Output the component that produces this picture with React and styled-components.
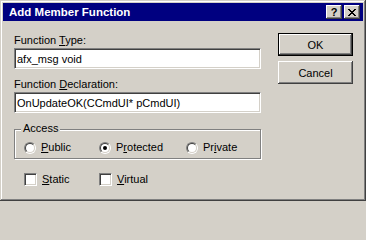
import React from "react";
import styled, { createGlobalStyle } from "styled-components";

const GlobalStyle = createGlobalStyle`
  html, body {
    margin: 0;
    padding: 0;
    background: #d4d0c8;
  }
  body {
    font-family: "Liberation Sans", Arial, sans-serif;
  }
`;

const raised = `
  box-shadow: inset -1px -1px #404040, inset 1px 1px #ffffff,
    inset -2px -2px #808080, inset 2px 2px #d4d0c8;
`;

const sunken = `
  border: 1px solid;
  border-color: #808080 #ffffff #ffffff #808080;
  box-shadow: inset 1px 1px #404040, inset -1px -1px #d4d0c8;
`;

const closePixels = [
  [0, 0], [6, 0],
  [1, 1], [5, 1],
  [2, 2], [4, 2],
  [3, 3],
  [2, 4], [4, 4],
  [1, 5], [5, 5],
  [0, 6], [6, 6],
];

function App() {
  return (
    <>
      <GlobalStyle />
      <Window>
        <TitleBar>
          <Title>Add Member Function</Title>
          <CaptionButton $gap>
            <HelpGlyph>?</HelpGlyph>
          </CaptionButton>
          <CaptionButton>
            <svg width="8" height="7" viewBox="0 0 8 7" shapeRendering="crispEdges">
              {closePixels.map(([x, y]) => (
                <rect key={`${x}-${y}`} x={x} y={y} width="2" height="1" fill="#000" />
              ))}
            </svg>
          </CaptionButton>
        </TitleBar>
        <Client>
          <LeftColumn>
            <Label>
              Function <u>T</u>ype:
            </Label>
            <Edit>afx_msg void</Edit>
            <Label $top={9}>
              Function <u>D</u>eclaration:
            </Label>
            <Edit>OnUpdateOK(CCmdUI* pCmdUI)</Edit>
            <Group>
              <Legend>Access</Legend>
              <OptionRow $top={6} $indent={9}>
                <Option $width={75}>
                  <Radio />
                  <span>
                    <u>P</u>ublic
                  </span>
                </Option>
                <Option $width={87}>
                  <Radio $checked />
                  <span>
                    P<u>r</u>otected
                  </span>
                </Option>
                <Option>
                  <Radio />
                  <span>
                    Pr<u>i</u>vate
                  </span>
                </Option>
              </OptionRow>
            </Group>
            <OptionRow $top={14} $indent={10}>
              <Option $width={75}>
                <Checkbox />
                <span>
                  <u>S</u>tatic
                </span>
              </Option>
              <Option>
                <Checkbox />
                <span>
                  <u>V</u>irtual
                </span>
              </Option>
            </OptionRow>
          </LeftColumn>
          <ButtonColumn>
            <PushButton $default>OK</PushButton>
            <PushButton>Cancel</PushButton>
          </ButtonColumn>
        </Client>
      </Window>
    </>
  );
}

export default App;

const Window = styled.div`
  width: 366px;
  height: 201px;
  box-sizing: border-box;
  padding: 3px;
  background: #d4d0c8;
  box-shadow: inset -1px -1px #404040, inset 1px 1px #d4d0c8,
    inset -2px -2px #808080, inset 2px 2px #ffffff;
  display: flex;
  flex-direction: column;
  font-size: 11px;
  color: #000;
`;

const TitleBar = styled.div`
  height: 18px;
  flex-shrink: 0;
  background: #000080;
  display: flex;
  align-items: center;
  padding: 0 3px 0 6px;
`;

const Title = styled.span`
  flex: 1;
  color: #fff;
  font-weight: bold;
  font-size: 11.5px;
  line-height: 18px;
  white-space: nowrap;
`;

const CaptionButton = styled.div`
  width: 16px;
  height: 14px;
  box-sizing: border-box;
  background: #d4d0c8;
  ${raised}
  display: flex;
  align-items: center;
  justify-content: center;
  margin-right: ${(p) => (p.$gap ? "2px" : "0")};
`;

const HelpGlyph = styled.span`
  font-weight: bold;
  font-size: 11px;
  line-height: 11px;
  margin-top: 1px;
`;

const Client = styled.div`
  display: flex;
  padding: 12px 9px 0 11px;
`;

const LeftColumn = styled.div`
  width: 247px;
  display: flex;
  flex-direction: column;
`;

const Label = styled.div`
  height: 13px;
  line-height: 13px;
  margin-top: ${(p) => p.$top ?? 1}px;
  margin-bottom: 1px;
  white-space: nowrap;
`;

const Edit = styled.div`
  height: 21px;
  box-sizing: border-box;
  background: #fff;
  ${sunken}
  display: flex;
  align-items: center;
  padding-left: 2px;
  white-space: nowrap;
`;

const Group = styled.div`
  margin-top: 16px;
  height: 30px;
  box-sizing: border-box;
  border: 1px solid #808080;
  box-shadow: inset 1px 1px #ffffff, 1px 1px #ffffff;
`;

const Legend = styled.div`
  width: fit-content;
  height: 13px;
  line-height: 13px;
  margin: -8px 0 0 6px;
  padding: 0 2px;
  background: #d4d0c8;
`;

const OptionRow = styled.div`
  display: flex;
  margin-top: ${(p) => p.$top}px;
  padding-left: ${(p) => p.$indent}px;
  height: 13px;
  line-height: 13px;
`;

const Option = styled.div`
  display: flex;
  align-items: center;
  gap: 5px;
  width: ${(p) => (p.$width ? `${p.$width}px` : "auto")};
  white-space: nowrap;
`;

const Radio = styled.span`
  position: relative;
  width: 12px;
  height: 12px;
  box-sizing: border-box;
  border-radius: 50%;
  border: 1px solid;
  border-color: #808080 #ffffff #ffffff #808080;
  flex-shrink: 0;

  &::before {
    content: "";
    position: absolute;
    inset: 0;
    border-radius: 50%;
    border: 1px solid;
    border-color: #404040 #d4d0c8 #d4d0c8 #404040;
    background: #fff;
  }

  &::after {
    content: "";
    display: ${(p) => (p.$checked ? "block" : "none")};
    position: absolute;
    left: 3px;
    top: 3px;
    width: 4px;
    height: 4px;
    border-radius: 50%;
    background: #000;
  }
`;

const Checkbox = styled.span`
  width: 13px;
  height: 13px;
  box-sizing: border-box;
  background: #fff;
  ${sunken}
  flex-shrink: 0;
`;

const ButtonColumn = styled.div`
  margin-left: 17px;
  display: flex;
  flex-direction: column;
  gap: 5px;
`;

const PushButton = styled.div`
  width: 75px;
  height: 23px;
  box-sizing: border-box;
  background: #d4d0c8;
  border: ${(p) => (p.$default ? "1px solid #000" : "none")};
  ${raised}
  display: flex;
  align-items: center;
  justify-content: center;
  font-size: 11px;
`;
